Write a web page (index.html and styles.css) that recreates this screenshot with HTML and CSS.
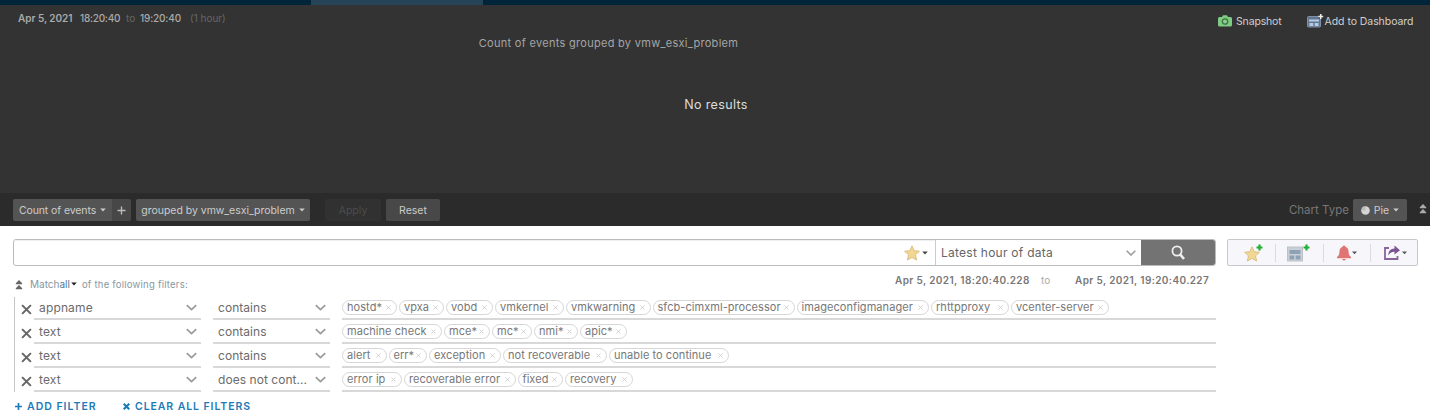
FILE: index.html
```html
<!DOCTYPE html>
<html lang="en">
<head>
<meta charset="utf-8">
<title>Interactive Analytics</title>
<link rel="stylesheet" href="styles.css">
</head>
<body>
<svg class="defs" width="0" height="0">
  <symbol id="x" viewBox="0 0 10 10"><path d="M1 1L9 9M9 1L1 9" fill="none" stroke="currentColor" stroke-width="1.8"/></symbol>
  <symbol id="tx" viewBox="0 0 10 10"><path d="M1 1L9 9M9 1L1 9" fill="none" stroke="currentColor" stroke-width="1.8"/></symbol>
  <symbol id="chev" viewBox="0 0 10 6"><path d="M.7 .8L5 5L9.3 .8" fill="none" stroke="currentColor" stroke-width="1.5"/></symbol>
  <symbol id="caret" viewBox="0 0 6 4"><path d="M.2 .5H5.8L3 3.6Z" fill="currentColor"/></symbol>
  <symbol id="up" viewBox="0 0 8 10"><path d="M4 0L7.2 3.2H.8ZM.8 3.2H7.2V4.2H.8ZM4 5L7.2 8.2H.8ZM.8 8.2H7.2V9.2H.8Z" fill="currentColor"/></symbol>
  <symbol id="star" viewBox="0 0 16 16"><path d="M8 .8L10.2 5.7L15.4 6.3L11.5 9.8L12.6 15L8 12.4L3.4 15L4.5 9.8L.6 6.3L5.8 5.7Z" fill="#f1d792" stroke="#dbc086" stroke-width="1" stroke-linejoin="round"/></symbol>
</svg>
<div class="nav"><div class="nav-active"></div></div>
<section class="chart">
  <div class="chart-head">
    <div class="range"><b>Apr 5, 2021</b><b class="t1">18:20:40</b><span class="to">to</span><b class="t2">19:20:40</b><span class="dur">(1 hour)</span></div>
    <div class="links">
      <svg width="14" height="12" viewBox="0 0 14 12"><path d="M1.5 2H4L5 .3H9L10 2H12.5Q14 2 14 3.5V10Q14 11.5 12.5 11.5H1.5Q0 11.5 0 10V3.5Q0 2 1.5 2Z" fill="#7fcb83"/><circle cx="7" cy="6.5" r="2.7" fill="#8bcf8e" stroke="#397044" stroke-width="1.3"/></svg>
      <span class="snap">Snapshot</span>
      <svg class="dash" width="17" height="14" viewBox="0 0 17 14"><rect x=".5" y="2.5" width="13" height="10.5" rx="1" fill="#64768f" stroke="#7f91aa"/><path d="M2 5.5H12V7.5H2ZM2.5 9H6.3V12H2.5ZM7.7 9H11.5V12H7.7Z" fill="#b3cbe8"/><path d="M13.7 0V5M11.2 2.5H16.2" stroke="#333" stroke-width="2.6"/><path d="M13.7 0V5M11.2 2.5H16.2" stroke="#eee" stroke-width="1.5"/></svg>
      <span class="add">Add to Dashboard</span>
    </div>
  </div>
  <div class="chart-title">Count of events grouped by vmw_esxi_problem</div>
  <div class="no-results">No results</div>
</section>
<section class="tools">
  <div class="btn count"><span>Count of events</span><svg width="6" height="4"><use href="#caret"/></svg></div>
  <div class="btn plus"><svg width="9" height="9" viewBox="0 0 9 9"><path d="M4.5 .5V8.5M.5 4.5H8.5" stroke="#bbb" stroke-width="1.4"/></svg></div>
  <div class="btn group"><span>grouped by vmw_esxi_problem</span><svg width="6" height="4"><use href="#caret"/></svg></div>
  <div class="btn apply">Apply</div>
  <div class="btn reset">Reset</div>
  <div class="chart-type">Chart Type</div>
  <div class="btn pie"><svg width="9" height="9" viewBox="0 0 9 9"><circle cx="4.5" cy="4.5" r="4.3" fill="#d5d5d5"/><path d="M4.5 4.5V.2A4.3 4.3 0 0 0 .2 4.5Z" fill="#bbb"/></svg><span>Pie</span><svg width="6" height="4"><use href="#caret"/></svg></div>
  <svg class="collapse" width="8" height="10"><use href="#up"/></svg>
</section>
<section class="search-row">
  <div class="search">
    <div class="query"><svg width="16" height="16"><use href="#star"/></svg><svg width="6" height="4"><use href="#caret"/></svg></div>
    <div class="period"><span>Latest hour of data</span><svg width="10" height="6"><use href="#chev"/></svg></div>
    <div class="go"><svg width="15" height="16" viewBox="0 0 15 16"><circle cx="6" cy="6" r="4.6" fill="none" stroke="#eee" stroke-width="1.8"/><path d="M9 9.2L13 14" stroke="#eee" stroke-width="2.6"/></svg></div>
  </div>
  <div class="actions">
    <div class="act"><svg width="19" height="18" viewBox="0 0 19 18"><use href="#star" y="2" width="16" height="16"/><path d="M15.5 .5V6.5M12.5 3.5H18.5" stroke="#22ad35" stroke-width="2.2"/></svg></div>
    <div class="act a2"><svg width="23" height="18" viewBox="0 0 23 18"><rect x=".5" y="3" width="15" height="14" fill="#c9cfd6" stroke="#bcc1c7"/><path d="M2.5 6H13.5V10H2.5ZM2.5 11.5H7.3V15.5H2.5ZM8.7 11.5H13.5V15.5H8.7Z" fill="#8fa1b4"/><path d="M19.5 .5V6.5M16.5 3.5H22.5" stroke="#22ad35" stroke-width="2.2"/></svg></div>
    <div class="act a3"><svg width="20" height="16" viewBox="0 0 20 16"><path d="M7 .5Q8.2 .5 8.4 1.7Q11.5 2.8 11.5 6.5Q11.5 10.5 14 12V13.2H0V12Q2.5 10.5 2.5 6.5Q2.5 2.8 5.6 1.7Q5.8 .5 7 .5ZM5 14H9Q8.3 15.6 7 15.6Q5.7 15.6 5 14Z" fill="#e07472"/><path d="M15 6.5H20L17.5 9.2Z" fill="#555"/></svg></div>
    <div class="act"><svg width="23" height="16" viewBox="0 0 23 16"><path d="M5 3H1V14H13.5V11" fill="none" stroke="#88629b" stroke-width="1.8"/><path d="M4 10.5Q4.5 3.5 10.5 3.5V.5L16 5.2L10.5 9.5V6.7Q6.5 6.5 4 10.5Z" fill="#7d5394"/><path d="M18 6.5H23L20.5 9.2Z" fill="#555"/></svg></div>
  </div>
</section>
<div class="meta">
  <svg class="m-up" width="8" height="10"><use href="#up"/></svg>
  <span class="match">Match</span><span class="all">all</span><svg class="m-caret" width="6" height="4"><use href="#caret"/></svg><span class="foll">of the following filters:</span>
  <span class="stamps"><b>Apr 5, 2021, 18:20:40.228</b><i>to</i><b>Apr 5, 2021, 19:20:40.227</b></span>
</div>
<div class="filters">
  <div class="row">
    <svg class="del" width="11" height="11"><use href="#x"/></svg>
    <div class="field f1"><span>appname</span><svg width="11" height="7"><use href="#chev"/></svg></div>
    <div class="field f2"><span>contains</span><svg width="11" height="7"><use href="#chev"/></svg></div>
    <div class="chips c1"><div class="chip">hostd*<svg width="5" height="5"><use href="#tx"/></svg></div><div class="chip">vpxa<svg width="5" height="5"><use href="#tx"/></svg></div><div class="chip">vobd<svg width="5" height="5"><use href="#tx"/></svg></div><div class="chip">vmkernel<svg width="5" height="5"><use href="#tx"/></svg></div><div class="chip">vmkwarning<svg width="5" height="5"><use href="#tx"/></svg></div><div class="chip">sfcb-cimxml-processor<svg width="5" height="5"><use href="#tx"/></svg></div><div class="chip">imageconfigmanager<svg width="5" height="5"><use href="#tx"/></svg></div><div class="chip">rhttpproxy<svg width="5" height="5"><use href="#tx"/></svg></div><div class="chip">vcenter-server<svg width="5" height="5"><use href="#tx"/></svg></div></div>
  </div>
  <div class="row">
    <svg class="del" width="11" height="11"><use href="#x"/></svg>
    <div class="field f1"><span>text</span><svg width="11" height="7"><use href="#chev"/></svg></div>
    <div class="field f2"><span>contains</span><svg width="11" height="7"><use href="#chev"/></svg></div>
    <div class="chips c2"><div class="chip">machine check<svg width="5" height="5"><use href="#tx"/></svg></div><div class="chip">mce*<svg width="5" height="5"><use href="#tx"/></svg></div><div class="chip">mc*<svg width="5" height="5"><use href="#tx"/></svg></div><div class="chip">nmi*<svg width="5" height="5"><use href="#tx"/></svg></div><div class="chip">apic*<svg width="5" height="5"><use href="#tx"/></svg></div></div>
  </div>
  <div class="row">
    <svg class="del" width="11" height="11"><use href="#x"/></svg>
    <div class="field f1"><span>text</span><svg width="11" height="7"><use href="#chev"/></svg></div>
    <div class="field f2"><span>contains</span><svg width="11" height="7"><use href="#chev"/></svg></div>
    <div class="chips c3"><div class="chip">alert<svg width="5" height="5"><use href="#tx"/></svg></div><div class="chip">err*<svg width="5" height="5"><use href="#tx"/></svg></div><div class="chip">exception<svg width="5" height="5"><use href="#tx"/></svg></div><div class="chip">not recoverable<svg width="5" height="5"><use href="#tx"/></svg></div><div class="chip">unable to continue<svg width="5" height="5"><use href="#tx"/></svg></div></div>
  </div>
  <div class="row">
    <svg class="del" width="11" height="11"><use href="#x"/></svg>
    <div class="field f1"><span>text</span><svg width="11" height="7"><use href="#chev"/></svg></div>
    <div class="field f2"><span>does not cont...</span><svg width="11" height="7"><use href="#chev"/></svg></div>
    <div class="chips c4"><div class="chip">error ip<svg width="5" height="5"><use href="#tx"/></svg></div><div class="chip">recoverable error<svg width="5" height="5"><use href="#tx"/></svg></div><div class="chip">fixed<svg width="5" height="5"><use href="#tx"/></svg></div><div class="chip">recovery<svg width="5" height="5"><use href="#tx"/></svg></div></div>
  </div>
</div>
<div class="foot">
  <svg width="7" height="7" viewBox="0 0 7 7"><path d="M3.5 0V7M0 3.5H7" stroke="#1c7bb8" stroke-width="1.7"/></svg><span class="f-add">ADD FILTER</span>
  <svg width="7" height="7" viewBox="0 0 10 10"><path d="M1 1L9 9M9 1L1 9" stroke="#1c7bb8" stroke-width="3"/></svg><span class="f-clear">CLEAR ALL FILTERS</span>
</div>
</body>
</html>
```
FILE: styles.css
```css
* { box-sizing: border-box; }
body { margin: 0; width: 1430px; height: 418px; overflow: hidden; background: #fff; font-family: Inter, "Liberation Sans", sans-serif; font-size: 11px; color: #666; white-space: nowrap; }
svg { display: block; flex: none; }
.defs { position: absolute; }
.nav { height: 5px; background: #00253b; padding-left: 311px; }
.nav-active { width: 172px; height: 5px; background: #264457; }

.chart { height: 188px; background: #333; }
.chart-head { height: 30px; display: flex; justify-content: space-between; align-items: flex-start; padding: 7px 16px 0 18px; }
.range { display: flex; font-size: 10px; line-height: 13px; color: #aaa; }
.range b { font-weight: 600; letter-spacing: -.03px; width: 62px; }
.range .t1 { font-weight: 500; width: 46px; letter-spacing: -.25px; }
.range .t2 { font-weight: 500; width: 50px; letter-spacing: -.15px; }
.to { width: 14px; color: #666; }
.dur { color: #666; }
.links { display: flex; align-items: center; width: 196px; height: 16px; margin-top: 1px; font-size: 10.5px; color: #d0d0d0; }
.snap { width: 75px; padding-left: 4px; letter-spacing: -.15px; }
.add { width: 91px; padding-left: 1px; letter-spacing: -.06px; }
.chart-title { width: 1217px; text-align: center; line-height: 16px; color: #a5a5a5; letter-spacing: .29px; }
.no-results { text-align: center; font-size: 12.5px; line-height: 18px; letter-spacing: .35px; color: #ddd; margin-top: 45px; padding-left: 2px; }

.tools { height: 33px; background: #2b2b2b; display: flex; align-items: center; padding: 1px 3px 0 13px; }
.btn { height: 22px; background: #545454; border-radius: 2px; color: #ccc; font-size: 10.5px; display: flex; align-items: center; justify-content: center; gap: 4px; flex: none; }
.count { width: 99px; border-radius: 2px 0 0 2px; letter-spacing: -.1px; }
.plus { width: 19px; background: #474747; border-radius: 0 2px 2px 0; }
.group { width: 174px; margin-left: 5px; letter-spacing: -.03px; }
.apply { width: 56px; margin-left: 15px; background: #313131; color: #4c4c4c; }
.reset { width: 54px; margin-left: 5px; background: #484848; }
.chart-type { margin-left: auto; margin-right: 4px; font-size: 11.5px; color: #777; }
.pie { width: 54px; }
.collapse { margin: 0 0 2px 12px; color: #aaa; }

.search-row { display: flex; padding: 13px 12px 0 13px; gap: 11px; height: 40px; }
.search { width: 1203px; height: 27px; display: flex; border: 1px solid #bbb; border-radius: 3px; overflow: hidden; }
.query { flex: 1; display: flex; align-items: center; justify-content: flex-end; gap: 2px; padding-right: 7px; color: #444; box-shadow: inset 0 1px 1px #eee; }
.period { width: 206px; border-left: 1px solid #ccc; display: flex; align-items: center; justify-content: space-between; padding: 0 5px; font-size: 12px; letter-spacing: .26px; color: #666; }
.period svg { color: #999; }
.go { width: 75px; background: #737373; margin-right: -1px; display: flex; align-items: center; justify-content: center; }
.actions { width: 191px; height: 27px; border: 1px solid #c8c8cc; border-radius: 2px; background: #f7f7fb; display: flex; align-items: center; }
.act { width: 47.3px; height: 18px; display: flex; align-items: center; justify-content: center; border-left: 1px solid #dcdcdf; padding-left: 3px; }
.act:first-child { border-left: 0; }
.act.a2 { padding: 0 2px 0 0; }
.act.a3 { padding: 0; }

.meta { height: 31px; padding: 5px 221px 0 15px; display: flex; align-items: flex-start; line-height: 13px; font-size: 10px; color: #8797a0; }
.m-up { margin-top: 9px; color: #666; }
.match { margin: 7px 0 0 7px; }
.all { margin-top: 7px; color: #51798f; }
.m-caret { margin: 11px 5px 0 1px; color: #222; }
.foll { margin-top: 7px; font-size: 9.5px; letter-spacing: .23px; }
.stamps { margin-left: auto; margin-top: 3px; display: flex; color: #777; }
.stamps b { font-weight: 600; width: 134px; letter-spacing: .38px; }
.stamps i { font-style: normal; width: 46px; padding-left: 12px; color: #aaa; }

.filters { margin-left: 14px; height: 95px; width: 1202px; border-left: 1px solid #c7c7c7; }
.row { display: flex; height: 24px; align-items: flex-start; }
.row:first-child { height: 23px; }
.row:first-child > * { margin-top: -1px; }
.del { margin: 8px 2px 0 6px; color: #666; }
.row:first-child .del { margin-top: 7px; }
.field { height: 24px; border-bottom: 2px solid #d8d8d8; display: flex; justify-content: space-between; align-items: center; padding: 0 4px 0 5px; font-size: 12px; color: #6b6b6b; }
.field svg { color: #999; }
.f1 { width: 167px; letter-spacing: .15px; }
.f2 { width: 117px; margin-left: 12px; letter-spacing: .05px; }
.chips { width: 874px; height: 24px; border-bottom: 2px solid #d8d8d8; margin-left: 12px; display: grid; gap: 2px; align-items: center; }
.c1 { grid-template-columns: 55px 45px 47px 69px 84.5px 142px 132.5px 78px 98px; }
.c2 { grid-template-columns: 100px 46px 40px 44px 47px; }
.c3 { grid-template-columns: 44.5px 38.5px 72px 104px 120px; }
.c4 { grid-template-columns: 60px 111.5px 45.5px 68px; }
.chip { height: 15px; border: 1px solid #d6d6d6; border-radius: 8px; padding: 0 5px 0 4px; font-size: 11px; letter-spacing: .06px; line-height: 13px; color: #777; display: flex; align-items: center; justify-content: space-between; }
.chip svg { color: #ccc; }
.foot { display: flex; align-items: center; padding: 7px 0 0 15px; height: 22px; font-size: 10.5px; font-weight: 600; letter-spacing: 1px; color: #1c7bb8; }
.f-add { margin-left: 5px; width: 96px; }
.f-clear { margin-left: 5px; letter-spacing: .92px; }
```
